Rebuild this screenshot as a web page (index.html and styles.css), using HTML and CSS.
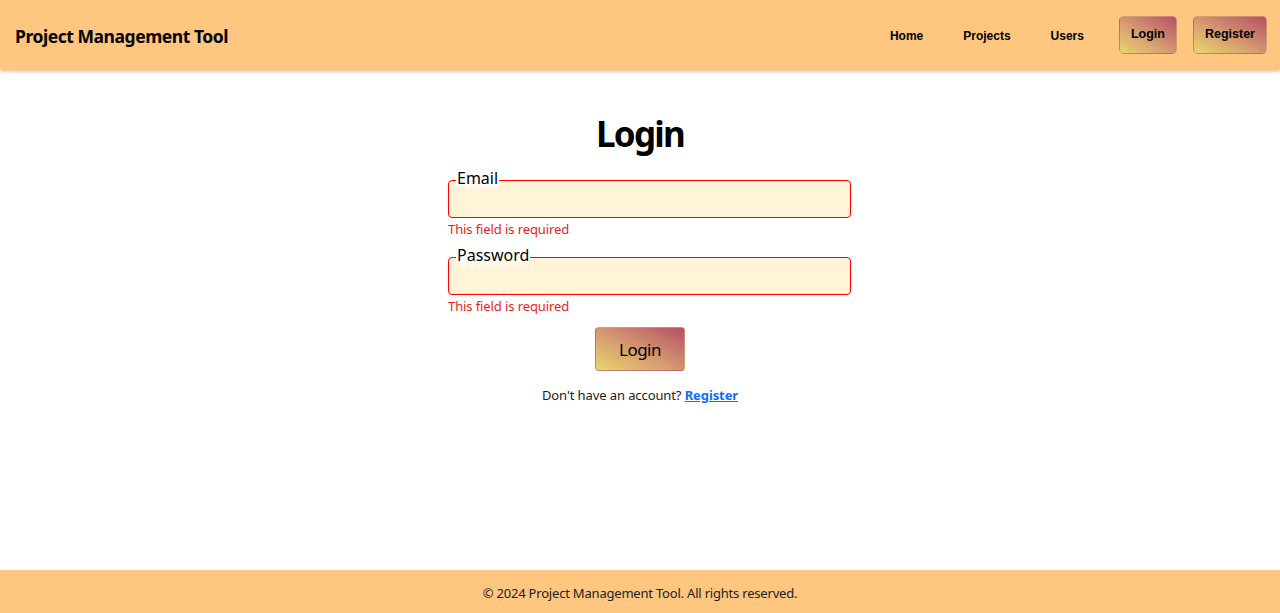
FILE: index.html
```html
<!DOCTYPE html>
<html lang="en">
<head>
<meta charset="utf-8">
<title>Project Management Tool</title>
<link rel="stylesheet" href="styles.css">
</head>
<body>
<div class="page">
  <header class="topbar">
    <div class="brand">Project Management Tool</div>
    <nav class="nav">
      <a class="nav-link" href="#">Home</a>
      <a class="nav-link" href="#">Projects</a>
      <a class="nav-link" href="#">Users</a>
      <button class="nav-btn">Login</button>
      <button class="nav-btn">Register</button>
    </nav>
  </header>
  <main class="main">
    <h1 class="title">Login</h1>
    <form class="form">
      <fieldset class="field">
        <legend class="legend">Email</legend>
        <input class="input" type="email">
      </fieldset>
      <div class="error">This field is required</div>
      <fieldset class="field">
        <legend class="legend">Password</legend>
        <input class="input" type="password">
      </fieldset>
      <div class="error error-last">This field is required</div>
      <div class="actions">
        <button class="submit" type="button">Login</button>
      </div>
      <p class="switch">Don't have an account? <a class="switch-link" href="#">Register</a></p>
    </form>
  </main>
  <footer class="footer">© 2024 Project Management Tool. All rights reserved.</footer>
</div>
</body>
</html>
```

FILE: styles.css
```css
* { box-sizing: border-box; }
html, body { margin: 0; padding: 0; }
body {
  font-family: "Noto Sans", "Open Sans", sans-serif;
  color: #000;
  background: #fff;
}
.page {
  min-height: 613px;
  display: flex;
  flex-direction: column;
}
.topbar {
  height: 70px;
  background: #ffc680;
  display: flex;
  align-items: center;
  justify-content: space-between;
  padding: 0 13px 0 15px;
  box-shadow: 0 2px 3px rgba(200, 140, 60, 0.45);
  position: relative;
  z-index: 1;
}
.brand {
  font-size: 17.5px;
  font-weight: 700;
  letter-spacing: -0.45px;
  padding-top: 1px;
}
.nav {
  display: flex;
  align-items: center;
}
.nav-link {
  font-family: "Liberation Sans", Arial, sans-serif;
  font-weight: 700;
  font-size: 12px;
  color: #000;
  text-decoration: none;
  margin-right: 40px;
  padding-top: 2px;
}
.nav-link:nth-child(3) { margin-right: 35px; }
.nav-btn {
  font-family: "Liberation Sans", Arial, sans-serif;
  font-weight: 700;
  font-size: 12.5px;
  color: #000;
  height: 38px;
  padding: 0 11px 3px;
  border: 1px solid rgba(190, 120, 110, 0.5);
  border-radius: 5px;
  background: linear-gradient(to top right, #e8d66c 0%, #d69c72 45%, #b64f66 100%);
}
.nav-btn + .nav-btn { margin-left: 16px; }
.main {
  flex: 1;
  display: flex;
  flex-direction: column;
  align-items: center;
  padding-top: 41px;
}
.title {
  margin: 0 0 12px;
  font-size: 35px;
  font-weight: 700;
  line-height: 46px;
  letter-spacing: -1.8px;
}
.form {
  width: 422px;
  display: flex;
  flex-direction: column;
}
.field {
  margin: 0 0 0 19px;
  padding: 0 7px;
  border: 1.6px solid #ff0000;
  border-radius: 4px;
  background: #fff4d8;
  height: 49px;
  min-width: 0;
}
.legend {
  padding: 0 1px 4px;
  font-size: 16px;
  line-height: 18px;
  background: linear-gradient(#fff 0, #fff 60%, #fff4d8 100%);
  border-radius: 0 0 8px 8px;
}
.input {
  border: none;
  background: transparent;
  width: 100%;
  height: 24px;
  outline: none;
}
.error {
  margin: 1px 0 7px 19px;
  color: #f02020;
  font-size: 13px;
  letter-spacing: -0.1px;
  line-height: 20px;
}
.error-last { margin-bottom: 0; }
.actions {
  display: flex;
  justify-content: center;
  margin-top: 11px;
}
.submit {
  font-family: "Noto Sans", "Open Sans", sans-serif;
  font-size: 17px;
  letter-spacing: -0.5px;
  width: 90px;
  height: 44px;
  border: 1px solid rgba(190, 120, 110, 0.5);
  border-radius: 4px;
  background: linear-gradient(to top right, #e8d66c 0%, #d69c72 45%, #b64f66 100%);
  color: #000;
  padding: 0;
}
.switch {
  margin: 14px 0 0;
  text-align: center;
  font-size: 13px;
  letter-spacing: -0.1px;
  line-height: 20px;
  color: #222;
}
.switch-link {
  color: #0d6efd;
  font-weight: 700;
}
.footer {
  height: 43px;
  background: #ffc680;
  display: flex;
  align-items: center;
  justify-content: center;
  font-size: 13px;
  letter-spacing: -0.2px;
  color: #222;
  padding-top: 2px;
}
```
